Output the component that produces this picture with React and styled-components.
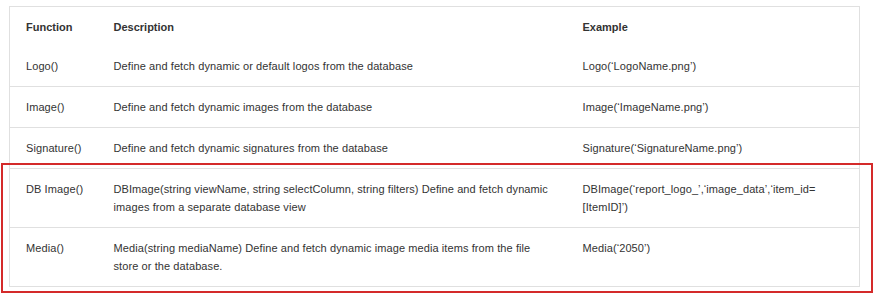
import React from 'react';
import styled, { createGlobalStyle } from 'styled-components';

const GlobalStyle = createGlobalStyle`
  body {
    margin: 0;
    background: #fff;
    font-family: 'Liberation Sans', Arial, sans-serif;
  }
`;

const Page = styled.div`
  position: relative;
  padding: 6px 16px 12px 9px;
`;

const Table = styled.table`
  width: 851px;
  border-collapse: collapse;
  border: 1px solid #e0e0e0;
  table-layout: fixed;
  color: #333;
`;

const Row = styled.tr`
  border-top: 1px solid #e0e0e0;
  &:first-child {
    border-top: none;
  }
`;

const HeadCell = styled.th`
  box-sizing: border-box;
  text-align: left;
  font-weight: bold;
  font-size: 11px;
  padding: 11px 14px 10px 16px;
  line-height: 18px;
  width: ${(p) => p.w || 'auto'};
`;

const Cell = styled.td`
  vertical-align: top;
  padding: 11px 14px 11px 16px;
  font-size: 11px;
  letter-spacing: 0.09px;
  line-height: 18px;
  white-space: ${(p) => (p.nowrap ? 'nowrap' : 'normal')};
`;

const Highlight = styled.div`
  position: absolute;
  left: 1px;
  top: 163px;
  width: 868px;
  height: 126px;
  border: 2px solid #d42a2a;
  pointer-events: none;
`;

const rows = [
  ['Logo()', 'Define and fetch dynamic or default logos from the database', 'Logo(\u2018LogoName.png\u2019)'],
  ['Image()', 'Define and fetch dynamic images from the database', 'Image(\u2018ImageName.png\u2019)'],
  ['Signature()', 'Define and fetch dynamic signatures from the database', 'Signature(\u2018SignatureName.png\u2019)'],
  [
    'DB Image()',
    'DBImage(string viewName, string selectColumn, string filters) Define and fetch dynamic images from a separate database view',
    'DBImage(\u2018report_logo_\u2019,\u2018image_data\u2019,\u2018item_id= [ItemID]\u2019)',
  ],
  [
    'Media()',
    'Media(string mediaName) Define and fetch dynamic image media items from the file store or the database.',
    'Media(\u20182050\u2019)',
  ],
];

export default function App() {
  return (
    <Page>
      <GlobalStyle />
      <Table>
        <thead>
          <Row>
            <HeadCell w="88px">Function</HeadCell>
            <HeadCell w="469px">Description</HeadCell>
            <HeadCell>Example</HeadCell>
          </Row>
        </thead>
        <tbody>
          {rows.map(([fn, desc, ex]) => (
            <Row key={fn}>
              <Cell nowrap>{fn}</Cell>
              <Cell>{desc}</Cell>
              <Cell>{ex}</Cell>
            </Row>
          ))}
        </tbody>
      </Table>
      <Highlight />
    </Page>
  );
}
